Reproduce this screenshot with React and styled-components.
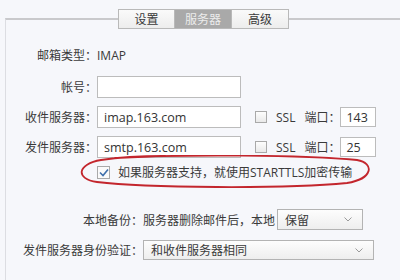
import React from "react";
import styled, { createGlobalStyle } from "styled-components";

const GlobalStyle = createGlobalStyle`
  html, body {
    margin: 0;
    padding: 0;
    background: #f6f7fb;
  }
  body {
    font-family: "Open Sans", "Noto Sans CJK SC", sans-serif;
    font-size: 12px;
    color: #3a3a3a;
  }
`;

const Page = styled.div`
  width: 400px;
  height: 280px;
  overflow: hidden;
  padding-top: 9px;
  box-sizing: border-box;
  background: #f6f7fb;
`;

const Tabs = styled.div`
  display: flex;
  margin-left: 118px;
  position: relative;
  z-index: 1;
  height: 20px;
`;

const Tab = styled.div`
  width: 57px;
  height: 20px;
  box-sizing: border-box;
  display: flex;
  align-items: center;
  justify-content: center;
  font-size: 12px;
  border: 1px solid #b9b9b9;
  border-left-width: ${(p) => (p.$first ? "1px" : "0")};
  background: ${(p) =>
    p.$active ? "#a9a9a9" : "linear-gradient(#fafafa, #ededed)"};
  color: ${(p) => (p.$active ? "#ececec" : "#3a3a3a")};
`;

const Panel = styled.div`
  margin-top: -11px;
  margin-left: 5px;
  border-top: 2px solid #c9c9cc;
  border-left: 1px solid #dcdde2;
  padding-top: 27px;
  height: 300px;
`;

const Row = styled.div`
  display: flex;
  align-items: center;
  height: ${(p) => p.$h || 22}px;
  margin-top: ${(p) => p.$mt || 0}px;
  position: relative;
`;

const Label = styled.div`
  width: ${(p) => p.$w}px;
  flex: none;
  text-align: right;
  white-space: nowrap;
`;

const Value = styled.span`
  white-space: nowrap;
  margin-left: ${(p) => p.$ml || 0}px;
`;

const Input = styled.div`
  width: ${(p) => p.$w}px;
  height: ${(p) => p.$h || 22}px;
  box-sizing: border-box;
  border: 1px solid #bcbcbc;
  background: #fff;
  margin-left: ${(p) => p.$ml || 0}px;
  padding-left: ${(p) => p.$pl || 6}px;
  display: flex;
  align-items: center;
  font-size: 12.5px;
  color: #333;
  flex: none;
`;

const Check = styled.div`
  width: ${(p) => p.$size}px;
  height: ${(p) => p.$size}px;
  box-sizing: border-box;
  border: 1px solid #a9a9a9;
  background: ${(p) =>
    p.$checked ? "#fafafa" : "linear-gradient(#fdfdfd, #e9e9e9)"};
  margin-left: ${(p) => p.$ml || 0}px;
  display: flex;
  align-items: center;
  justify-content: center;
  flex: none;
`;

const Select = styled.div`
  width: ${(p) => p.$w}px;
  height: ${(p) => p.$h}px;
  box-sizing: border-box;
  border: 1px solid #b3b3b3;
  background: linear-gradient(#fdfdfd, #eeeeee);
  margin-left: ${(p) => p.$ml || 0}px;
  padding: 0 10px 0 7px;
  display: flex;
  align-items: center;
  justify-content: space-between;
  flex: none;
`;

const Annotation = styled.svg`
  position: absolute;
  left: 69px;
  top: -9px;
  pointer-events: none;
`;

const Chevron = () => (
  <svg width="8" height="5" viewBox="0 0 8 5">
    <polyline points="0.5,0.5 4,4 7.5,0.5" fill="none" stroke="#9a9a9a" strokeWidth="1" />
  </svg>
);

const Tick = () => (
  <svg width="10" height="9" viewBox="0 0 10 9">
    <polyline points="1,4.5 4,7.5 9,1.5" fill="none" stroke="#3f6fab" strokeWidth="1.6" />
  </svg>
);

const ServerRow = ({ label, host, port, mt }) => (
  <Row $mt={mt}>
    <Label $w={91}>{label}</Label>
    <Input $w={144}>{host}</Input>
    <Check $size={12} $ml={14} />
    <Value $ml={9}>SSL</Value>
    <Value $ml={9}>端口：</Value>
    <Input $w={36} $h={20} $pl={5}>{port}</Input>
  </Row>
);

export default function App() {
  return (
    <>
      <GlobalStyle />
      <Page>
        <Tabs>
          <Tab $first>设置</Tab>
          <Tab $active>服务器</Tab>
          <Tab>高级</Tab>
        </Tabs>
        <Panel>
          <Row $h={16}>
            <Label $w={91}>邮箱类型：</Label>
            <Value>IMAP</Value>
          </Row>
          <Row $mt={13}>
            <Label $w={91}>帐号：</Label>
            <Input $w={144} />
          </Row>
          <ServerRow mt={8} label="收件服务器：" host="imap.163.com" port="143" />
          <ServerRow mt={8} label="发件服务器：" host="smtp.163.com" port="25" />
          <Row $mt={6} $h={16}>
            <Label $w={91} />
            <Check $size={13} $checked>
              <Tick />
            </Check>
            <Value $ml={8}>如果服务器支持，就使用STARTTLS加密传输</Value>
            <Annotation width="300" height="34" viewBox="0 0 300 34">
              <path
                d="M40 3 C 110 -1, 230 0, 282 5 C 300 8, 298 24, 272 28 C 210 34, 70 33, 22 27 C 0 24, 2 9, 26 5 C 45 2, 70 1, 90 1"
                fill="none"
                stroke="#c3262d"
                strokeWidth="1.8"
                strokeLinecap="round"
              />
            </Annotation>
          </Row>
          <Row $mt={29} $h={21}>
            <Label $w={137}>本地备份：</Label>
            <Value>服务器删除邮件后，本地</Value>
            <Select $w={86} $h={21} $ml={2}>
              保留
              <Chevron />
            </Select>
          </Row>
          <Row $mt={10} $h={20}>
            <Label $w={137}>发件服务器身份验证：</Label>
            <Select $w={231} $h={20}>
              和收件服务器相同
              <Chevron />
            </Select>
          </Row>
        </Panel>
      </Page>
    </>
  );
}
